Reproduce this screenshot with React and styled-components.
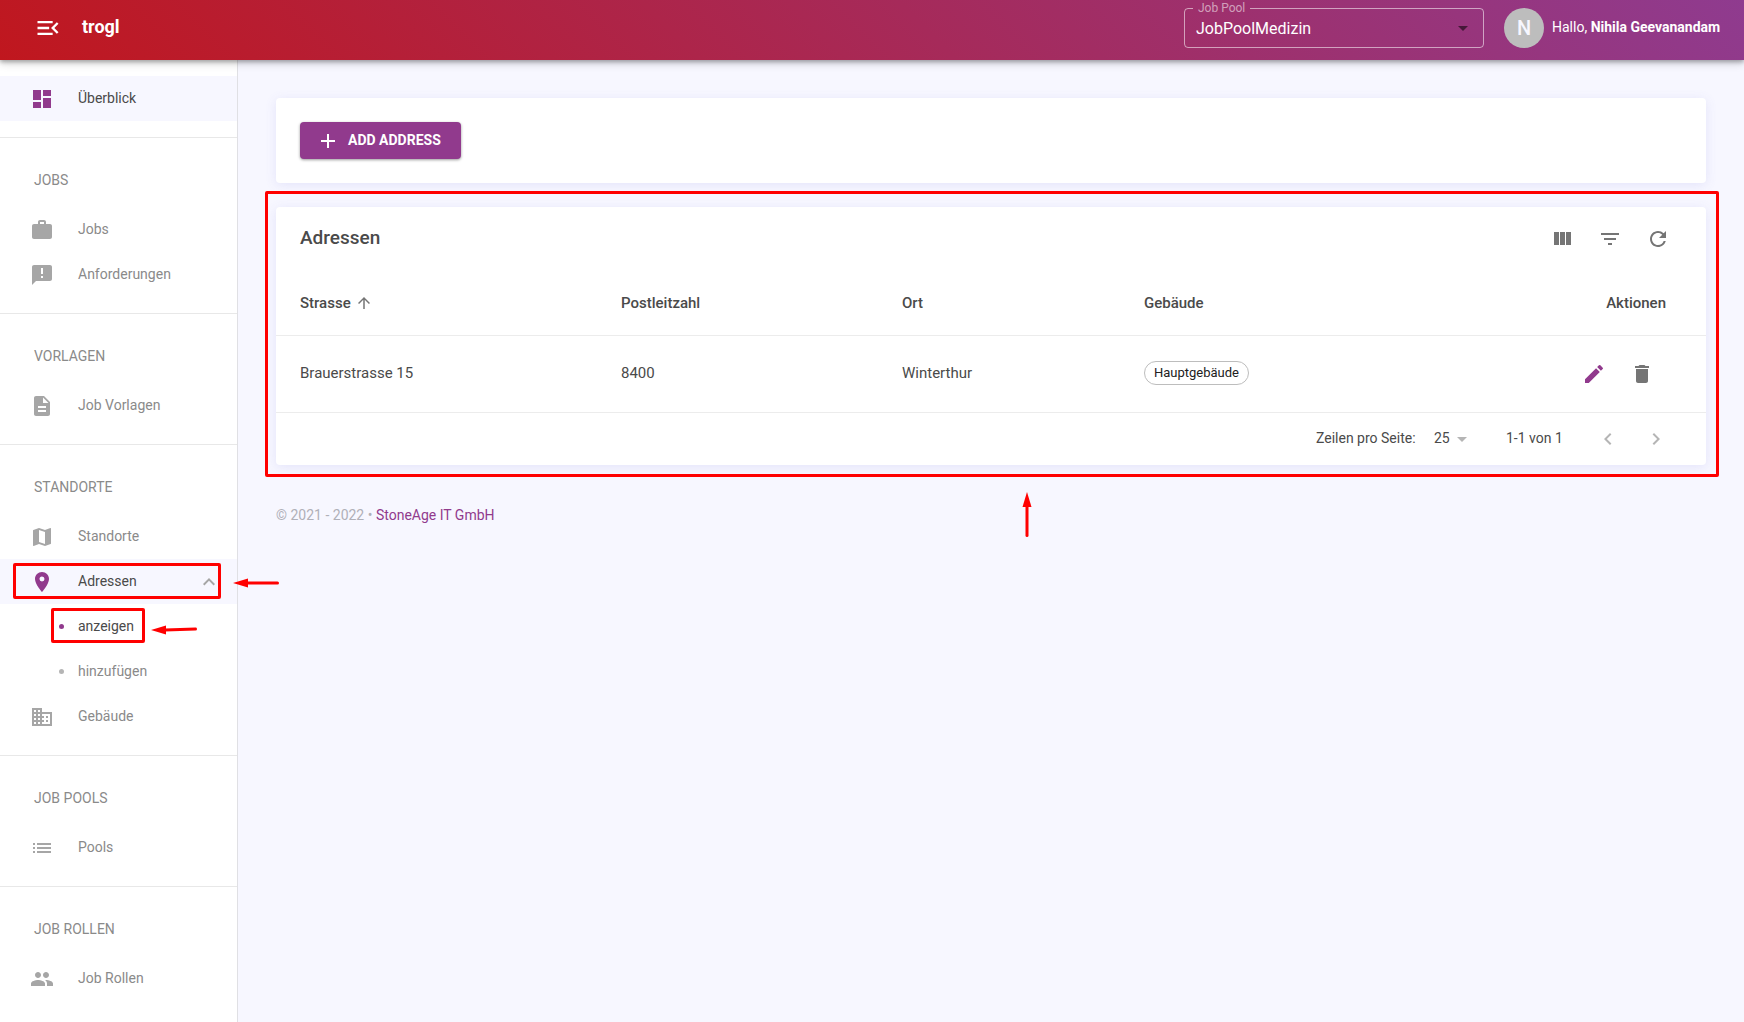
import { useState } from "react";
import styled, { createGlobalStyle, css } from "styled-components";
import {
    MdAdd, MdAnnouncement, MdArrowDropDown, MdArrowUpward, MdBusiness, MdChevronLeft, MdChevronRight,
    MdDashboard, MdDelete, MdDescription, MdEdit, MdExpandLess, MdFilterList, MdList, MdMap,
    MdMenuOpen, MdPeople, MdPlace, MdRefresh, MdWork,
} from "react-icons/md";

const GlobalStyle = createGlobalStyle`
    * {
        box-sizing: border-box;
    }

    body {
        margin: 0;
        background: #f7f7ff;
        color: #4a4a4a;
        font-family: Roboto, "Liberation Sans", sans-serif;
        font-size: 14px;
    }

    button, select {
        font-family: inherit;
    }
`;

const Header = styled.header`
    position: relative;
    z-index: 2;
    display: flex;
    align-items: center;
    height: 60px;
    padding: 0 20px 4px 34px;
    background: linear-gradient(45deg, #c0171e 0%, #8f3b8f 100%);
    box-shadow: 0 2px 4px rgba(0, 0, 0, 0.28), 0 4px 8px rgba(0, 0, 0, 0.14);
    color: #fff;
`;

const IconButton = styled.button`
    display: flex;
    align-items: center;
    justify-content: center;
    width: ${(p) => p.$size || 48}px;
    height: ${(p) => p.$size || 48}px;
    padding: 0;
    border: 0;
    background: none;
    color: ${(p) => p.$color || "#757575"};
    font-size: ${(p) => p.$icon || 24}px;
    cursor: pointer;
`;

const Brand = styled.span`
    flex: 1;
    padding: 0 0 4px 20px;
    font-size: 18px;
    font-weight: 700;
`;

const PoolField = styled.fieldset`
    display: flex;
    width: 300px;
    height: 48px;
    margin: 0 20px 8px 0;
    padding: 0;
    border: 1px solid rgba(255, 255, 255, 0.55);
    border-radius: 4px;

    legend {
        height: 16px;
        margin-left: 8px;
        padding: 0 5px;
        color: rgba(255, 255, 255, 0.55);
        font-size: 12px;
        line-height: 16px;
    }
`;

const SelectWrap = styled.div`
    display: flex;
    align-items: center;
    width: 100%;
    height: 100%;

    select {
        flex: 1;
        align-self: stretch;
        padding: 0 0 6px 11px;
        border: 0;
        outline: 0;
        background: none;
        color: #fff;
        font-size: 16px;
        appearance: none;
    }

    svg {
        margin: 0 8px 8px 0;
        color: rgba(0, 0, 0, 0.54);
        font-size: 24px;
    }
`;

const Avatar = styled.span`
    display: flex;
    align-items: center;
    justify-content: center;
    width: 40px;
    height: 40px;
    margin-right: 8px;
    border-radius: 50%;
    background: #bdbdbd;
    color: #f7f7ff;
    font-size: 20px;
    font-weight: 500;
`;

const Greeting = styled.span`
    min-width: 172px;
    padding-bottom: 2px;
    font-size: 14px;
`;

const Body = styled.div`
    display: flex;
    min-height: calc(100vh - 60px);
`;

const Sidebar = styled.nav`
    flex: none;
    width: 238px;
    border-right: 1px solid #e0e0e4;
    background: #fff;
`;

const Section = styled.section`
    padding: 16px 0;

    & + & {
        border-top: 1px solid #e8e8e8;
    }

    ul {
        margin: 0;
        padding: 0;
        list-style: none;
    }
`;

const SectionTitle = styled.h2`
    margin: 0;
    padding-left: 34px;
    color: #8a8a8a;
    font-size: 14px;
    font-weight: 400;
    line-height: 53px;
    text-transform: uppercase;
`;

const NavItem = styled.li`
    position: relative;
`;

const NavLink = styled.a`
    display: flex;
    align-items: center;
    height: 45px;
    padding: 0 16px 0 30px;
    background: ${(p) => (p.$highlight ? "#f7f7ff" : "transparent")};
    color: ${(p) => (p.$active ? "#4a4a4a" : "#8a8a8a")};
    text-decoration: none;

    > svg {
        flex: none;
        color: ${(p) => (p.$active ? "#913a8d" : "#a6a6a6")};
        font-size: 24px;
    }

    span {
        flex: 1;
        padding: 0 0 2px 24px;
    }

    > span + svg {
        color: #a6a6a6;
    }
`;

const SubLink = styled(NavLink)`
    padding-left: 59px;

    &::before {
        content: "";
        width: 5px;
        height: 5px;
        border-radius: 50%;
        background: ${(p) => (p.$active ? "#913a8d" : "#b5b5b5")};
    }

    span {
        padding-left: 14px;
    }
`;

const Main = styled.main`
    flex: 1;
    min-width: 0;
    padding: 38px;
`;

const card = css`
    border-radius: 4px;
    background: #fff;
    box-shadow: 0 2px 12px rgba(90, 90, 210, 0.12);
`;

const ActionBar = styled.div`
    ${card}
    margin-bottom: 24px;
    padding: 24px;
`;

const AddButton = styled.button`
    display: flex;
    align-items: center;
    gap: 8px;
    min-width: 161px;
    height: 37px;
    padding: 0 16px;
    border: 0;
    border-radius: 4px;
    background: #913a8d;
    box-shadow: 0 1px 3px rgba(0, 0, 0, 0.4);
    color: #fff;
    font-size: 14px;
    font-weight: 700;
    text-transform: uppercase;
    cursor: pointer;

    svg {
        font-size: 24px;
    }

    span {
        padding-bottom: 2px;
    }
`;

const TableCard = styled.section`
    ${card}
    position: relative;
`;

const Toolbar = styled.div`
    display: flex;
    align-items: center;
    height: 64px;
    padding: 0 24px;

    h1 {
        flex: 1;
        margin: 0;
        padding-bottom: 4px;
        font-size: 19px;
        font-weight: 500;
    }
`;

const Table = styled.table`
    width: 100%;
    border-collapse: collapse;
    table-layout: fixed;

    th, td {
        padding: 0 16px;
        border-bottom: 1px solid #ececec;
        text-align: left;
    }

    th {
        height: 64px;
        font-size: 15px;
        font-weight: 500;
    }

    td {
        height: 77px;
        padding-bottom: 2px;
        font-size: 15px;
    }

    th:first-child, td:first-child {
        padding-left: 24px;
    }

    th:last-child, td:last-child {
        padding-right: 40px;
        padding-bottom: 0;
        text-align: right;
    }
`;

const Column = styled.col`
    width: ${(p) => p.$width}px;
`;

const SortLabel = styled.button`
    display: flex;
    align-items: center;
    gap: 4px;
    padding: 0;
    border: 0;
    background: none;
    color: inherit;
    font-size: inherit;
    font-weight: inherit;

    svg {
        color: #757575;
        font-size: 18px;
    }
`;

const Chip = styled.span`
    display: inline-flex;
    align-items: center;
    justify-content: center;
    min-width: 105px;
    height: 24px;
    padding: 0 8px;
    border: 1px solid #bdbdbd;
    border-radius: 12px;
    color: #212121;
    font-size: 13px;
`;

const Actions = styled.div`
    display: flex;
    justify-content: flex-end;
`;

const Pagination = styled.div`
    display: flex;
    align-items: center;
    justify-content: flex-end;
    height: 52px;
    padding-right: 26px;
`;

const RowsLabel = styled.label`
    min-width: 102px;
    padding-bottom: 2px;
`;

const RowsSelect = styled.span`
    display: flex;
    align-items: center;
    margin: 0 32px 0 16px;

    select {
        padding: 0 0 2px;
        border: 0;
        outline: 0;
        background: none;
        color: inherit;
        font-size: 14px;
        appearance: none;
    }

    svg {
        color: #b5b5b5;
        font-size: 24px;
    }
`;

const RangeLabel = styled.span`
    min-width: 58px;
    margin-right: 20px;
    padding-bottom: 2px;
`;

const Footer = styled.footer`
    padding-top: 40px;
    color: #b0b0b8;
    line-height: 20px;

    a {
        color: #913a8d;
        text-decoration: none;
    }
`;

// red annotations drawn over the page
const Marker = styled.span`
    position: absolute;
    top: ${(p) => p.$top}px;
    right: ${(p) => p.$right}px;
    bottom: ${(p) => p.$bottom}px;
    left: ${(p) => p.$left}px;
    border: 3px solid #f00;
    border-radius: 2px;
    pointer-events: none;
`;

const ArrowLeft = styled.svg`
    position: absolute;
    top: ${(p) => p.$top}px;
    left: ${(p) => p.$left}px;
    z-index: 1;
    pointer-events: none;
`;

const ArrowUp = styled.svg`
    position: absolute;
    top: calc(100% + 27px);
    left: calc(50% + 30px);
    pointer-events: none;
`;

function PointerLeft({ top, left, tilt = 0 }) {
    return (
        <ArrowLeft $top={top} $left={left} width="47" height="12" viewBox="0 0 47 12">
            <path d={`M14 6L44.5 ${6 - tilt}`} stroke="#f00" strokeWidth="3" strokeLinecap="round" />
            <path d="M0 6L15 1.5V10.5Z" fill="#f00" />
        </ArrowLeft>
    );
}

function ViewColumnIcon() {
    return (
        <svg width="24" height="24" viewBox="0 0 24 24" fill="currentColor">
            <path d="M10 18h5V5h-5v13zm-6 0h5V5H4v13zM16 5v13h5V5h-5z" />
        </svg>
    );
}

const sections = [
    { items: [{ label: "Überblick", icon: MdDashboard, active: true }] },
    {
        title: "Jobs",
        items: [
            { label: "Jobs", icon: MdWork },
            { label: "Anforderungen", icon: MdAnnouncement },
        ],
    },
    { title: "Vorlagen", items: [{ label: "Job Vorlagen", icon: MdDescription }] },
    {
        title: "Standorte",
        items: [
            { label: "Standorte", icon: MdMap },
            {
                label: "Adressen",
                icon: MdPlace,
                active: true,
                children: [{ label: "anzeigen", active: true }, { label: "hinzufügen" }],
            },
            { label: "Gebäude", icon: MdBusiness },
        ],
    },
    { title: "Job Pools", items: [{ label: "Pools", icon: MdList }] },
    { title: "Job Rollen", items: [{ label: "Job Rollen", icon: MdPeople }] },
];

function NavEntry({ item }) {
    const Icon = item.icon;
    return (
        <>
            <NavItem>
                <NavLink href="#" $active={item.active} $highlight={item.active}>
                    <Icon />
                    <span>{item.label}</span>
                    {item.children && <MdExpandLess />}
                </NavLink>
                {item.children && (
                    <>
                        <Marker $top={4} $right={16} $bottom={5} $left={13} />
                        <PointerLeft top={18} left={233} />
                    </>
                )}
            </NavItem>
            {item.children?.map((child) => (
                <NavItem key={child.label}>
                    <SubLink href="#" $active={child.active}>
                        <span>{child.label}</span>
                    </SubLink>
                    {child.active && (
                        <>
                            <Marker $top={4} $right={92} $bottom={6} $left={51} />
                            <PointerLeft top={20} left={151} tilt={1} />
                        </>
                    )}
                </NavItem>
            ))}
        </>
    );
}

export default function App() {
    const [pool, setPool] = useState("JobPoolMedizin");
    const [rows, setRows] = useState("25");

    return (
        <>
            <GlobalStyle />
            <Header>
                <IconButton $size={28} $icon={28} $color="#fff" aria-label="Menü">
                    <MdMenuOpen />
                </IconButton>
                <Brand>trogl</Brand>
                <PoolField>
                    <legend>
                        <label htmlFor="pool">Job Pool</label>
                    </legend>
                    <SelectWrap>
                        <select id="pool" value={pool} onChange={(e) => setPool(e.target.value)}>
                            <option>JobPoolMedizin</option>
                        </select>
                        <MdArrowDropDown />
                    </SelectWrap>
                </PoolField>
                <Avatar>N</Avatar>
                <Greeting>
                    Hallo, <b>Nihila Geevanandam</b>
                </Greeting>
            </Header>
            <Body>
                <Sidebar>
                    {sections.map((section) => (
                        <Section key={section.title || "top"}>
                            {section.title && <SectionTitle>{section.title}</SectionTitle>}
                            <ul>
                                {section.items.map((item) => (
                                    <NavEntry key={item.label} item={item} />
                                ))}
                            </ul>
                        </Section>
                    ))}
                </Sidebar>
                <Main>
                    <ActionBar>
                        <AddButton>
                            <MdAdd />
                            <span>Add Address</span>
                        </AddButton>
                    </ActionBar>
                    <TableCard>
                        <Toolbar>
                            <h1>Adressen</h1>
                            <IconButton aria-label="Spalten"><ViewColumnIcon /></IconButton>
                            <IconButton aria-label="Filter"><MdFilterList /></IconButton>
                            <IconButton aria-label="Aktualisieren"><MdRefresh /></IconButton>
                        </Toolbar>
                        <Table>
                            <colgroup>
                                <Column $width={329} />
                                <Column $width={281} />
                                <Column $width={242} />
                                <Column $width={289} />
                                <Column $width={289} />
                            </colgroup>
                            <thead>
                                <tr>
                                    <th>
                                        <SortLabel>
                                            Strasse <MdArrowUpward />
                                        </SortLabel>
                                    </th>
                                    <th>Postleitzahl</th>
                                    <th>Ort</th>
                                    <th>Gebäude</th>
                                    <th>Aktionen</th>
                                </tr>
                            </thead>
                            <tbody>
                                <tr>
                                    <td>Brauerstrasse 15</td>
                                    <td>8400</td>
                                    <td>Winterthur</td>
                                    <td><Chip>Hauptgebäude</Chip></td>
                                    <td>
                                        <Actions>
                                            <IconButton $color="#913a8d" aria-label="Bearbeiten"><MdEdit /></IconButton>
                                            <IconButton aria-label="Löschen"><MdDelete /></IconButton>
                                        </Actions>
                                    </td>
                                </tr>
                            </tbody>
                        </Table>
                        <Pagination>
                            <RowsLabel htmlFor="rows">Zeilen pro Seite:</RowsLabel>
                            <RowsSelect>
                                <select id="rows" value={rows} onChange={(e) => setRows(e.target.value)}>
                                    <option>25</option>
                                </select>
                                <MdArrowDropDown />
                            </RowsSelect>
                            <RangeLabel>1-1 von 1</RangeLabel>
                            <IconButton $color="#b5b5b5" aria-label="Zurück"><MdChevronLeft /></IconButton>
                            <IconButton $color="#b5b5b5" aria-label="Weiter"><MdChevronRight /></IconButton>
                        </Pagination>
                        <Marker $top={-16} $right={-13} $bottom={-12} $left={-11} />
                        <ArrowUp width="12" height="46" viewBox="0 0 12 46">
                            <path d="M6 14V43.5" stroke="#f00" strokeWidth="3" strokeLinecap="round" />
                            <path d="M6 0L10.5 15H1.5Z" fill="#f00" />
                        </ArrowUp>
                    </TableCard>
                    <Footer>
                        © 2021 - 2022 • <a href="#">StoneAge IT GmbH</a>
                    </Footer>
                </Main>
            </Body>
        </>
    );
}
